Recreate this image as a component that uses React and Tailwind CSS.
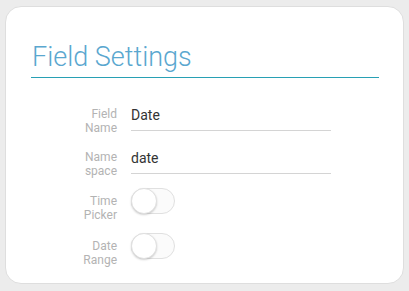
import React from "react";

const Toggle = () => (
  <div className="relative w-[44px] h-[26px] rounded-full border border-[#e0e0e0] bg-[#fbfbfb]">
    <div className="absolute left-[-1px] top-[-1px] w-[26px] h-[26px] rounded-full bg-white border border-[#e0e0e0] shadow-[0_1px_2px_rgba(0,0,0,0.18)]"></div>
  </div>
);

const Label = ({ a, b, className = "" }) => (
  <div className={"w-[86px] text-right text-[12px] leading-[14px] text-[#b3b3b3] " + className}>
    <div>{a}</div>
    <div>{b}</div>
  </div>
);

const App = () => {
  return (
    <div className="w-[409px] h-[291px] bg-[#ececec] p-[5px] pt-[6px] pb-[7px] font-['Roboto',sans-serif]">
      <div className="h-full bg-white rounded-[16px] border border-[#dedede] px-[25px] pt-[35px]">
        {/* TITLE */}
        <h1 className="text-[27px] leading-[30px] font-light text-[#5aa7cf] pl-[1px]">
          Field Settings
        </h1>
        <div className="mt-[5px] h-[1px] bg-[#28a0b4] w-[348px]"></div>

        {/* FIELDS */}
        <div className="mt-[29px] flex flex-col">
          <div className="flex gap-[14px]">
            <Label a="Field" b="Name" />
            <div className="w-[200px] border-b border-[#d4d4d4] h-[24px] text-[14px] leading-[16px] text-[#333]">
              Date
            </div>
          </div>
          <div className="mt-[15px] flex gap-[14px]">
            <Label a="Name" b="space" />
            <div className="w-[200px] border-b border-[#d4d4d4] h-[24px] text-[14px] leading-[16px] text-[#333]">
              date
            </div>
          </div>
          <div className="mt-[10px] flex items-start gap-[14px]">
            <Label a="Time" b="Picker" className="mt-[6px]" />
            <Toggle />
          </div>
          <div className="mt-[11px] flex items-start gap-[14px]">
            <Label a="Date" b="Range" className="mt-[6px]" />
            <Toggle />
          </div>
        </div>
      </div>
    </div>
  );
};

export default App;
